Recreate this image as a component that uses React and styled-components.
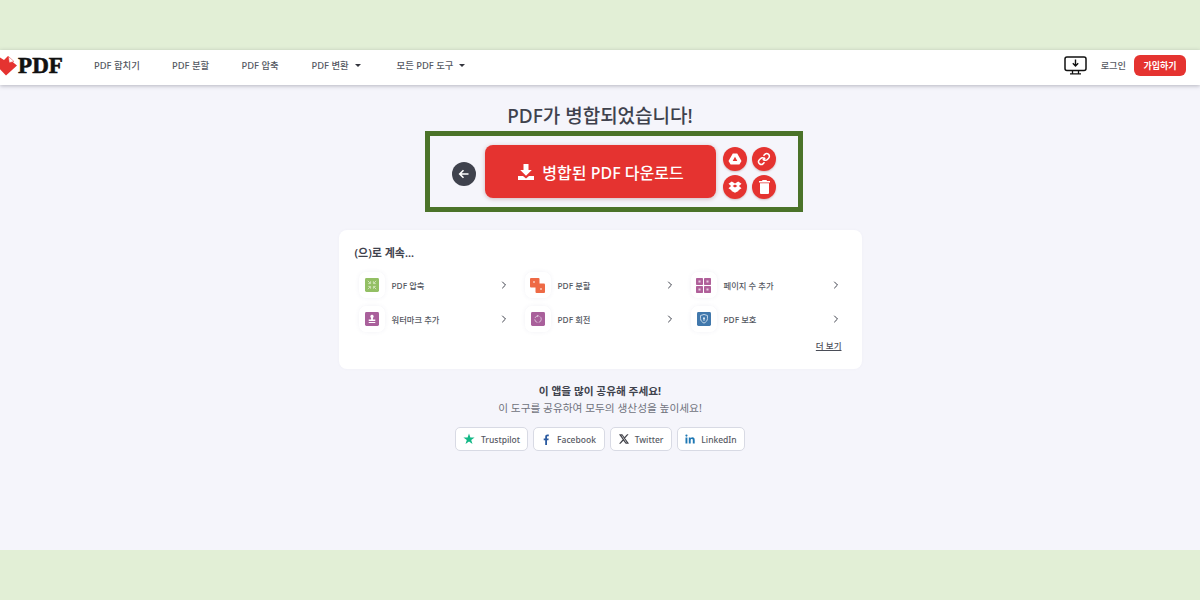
import React from "react";
import styled, { createGlobalStyle } from "styled-components";
import { ChevronRight } from "lucide-react";

const FONT = `"Noto Sans", "Noto Sans CJK KR", sans-serif`;

const Global = createGlobalStyle`
  html, body { margin: 0; padding: 0; background: #e2efd6; }
  * { box-sizing: border-box; }
  body { font-family: ${FONT}; color: #3f424d; }
`;
const Frame = styled.div`
  width: 1200px; height: 600px; padding: 50px 0; overflow: hidden; background: #e2efd6;
`;
const Page = styled.div`
  height: 500px; background: #f5f5fb; display: flex; flex-direction: column; align-items: center;
`;
const Header = styled.header`
  width: 100%; height: 35px; flex: none; background: #fff; box-shadow: 0 1px 4px rgba(60,60,80,.35);
  display: flex; align-items: center; padding: 0 14px 5px 0; overflow: hidden;
`;
const Logo = styled.div`
  display: flex; align-items: center; margin-left: -5px; width: 99px; flex: none;
`;
const LogoText = styled.span`
  font-family: "Liberation Serif", serif; font-weight: 700; font-size: 23px; line-height: 1; color: #111; letter-spacing: .1px;
  -webkit-text-stroke: .6px #111;
`;
const Nav = styled.nav`display: flex; align-items: center; flex: 1;`;
const NavItem = styled.a`
  font-size: 9.4px; font-weight: 500; color: #555862; display: flex; align-items: center; gap: 6px; white-space: nowrap;
  width: ${p => p.$w}px;
`;
const Caret = styled.i`
  width: 0; height: 0; border: 3px solid transparent; border-top: 3.5px solid #33353d; border-bottom: 0; display: block;
`;
const Login = styled.a`
  font-size: 9.2px; font-weight: 500; color: #555862; margin: 0 8px 0 14px;
`;
const Signup = styled.a`
  width: 52px; height: 21px; border-radius: 6px; background: #e53330; color: #fff; font-size: 9px; font-weight: 700;
  display: flex; align-items: center; justify-content: center;
`;
const Title = styled.h1`
  margin: 18px 0 0; font-size: 19px; line-height: 27px; font-weight: 500; color: #3f424d; height: 27px;
`;
const ActionBox = styled.section`
  margin: 1px 0 0 28px; width: 378px; height: 81px; border: 5px solid #4b7329; display: flex; align-items: center; padding-left: 22px;
`;
const RoundBack = styled.button`
  width: 24px; height: 24px; border: 0; padding: 0; border-radius: 50%; background: #3f424d; display: flex; align-items: center; justify-content: center; flex: none; margin-top: 5px;
`;
const Download = styled.button`
  margin-left: 9px; width: 231px; height: 53px; border: 0; border-radius: 8px; background: #e53330; color: #fff; font-family: ${FONT}; font-size: 16px; font-weight: 500;
  display: flex; align-items: center; justify-content: center; gap: 7px; box-shadow: 0 1px 4px rgba(120,40,40,.3); flex: none;
`;
const SideGrid = styled.div`
  margin: 2px 0 0 7px; display: grid; grid-template-columns: 24px 24px; gap: 4px 5px;
`;
const Round = styled.button`
  width: 24px; height: 24px; border: 0; padding: 0; border-radius: 50%; background: #e53330; display: flex; align-items: center; justify-content: center; box-shadow: 0 1px 2px rgba(120,40,40,.25);
`;
const Card = styled.section`
  margin-top: 18px; width: 523px; height: 139px; background: #fff; border-radius: 8px; padding: 15px 15px 0 16px; box-shadow: 0 0 3px rgba(80,80,120,.04);
`;
const CardTitle = styled.h2`
  margin: 0; font-size: 11px; line-height: 16px; font-weight: 600; color: #3f424d;
`;
const ToolGrid = styled.div`
  margin-top: 7px; display: grid; grid-template-columns: repeat(3, 166px); grid-auto-rows: 34px;
`;
const Tool = styled.a`
  display: flex; align-items: center; padding: 0 11px 0 4px;
`;
const IconFrame = styled.span`
  width: 26px; height: 26px; border-radius: 7px; background: #fff; box-shadow: 0 0 4px rgba(90,90,140,.08); display: flex; align-items: center; justify-content: center; flex: none;
`;
const ToolName = styled.span`
  margin-left: 7px; font-size: 8.3px; font-weight: 500; color: #555862; flex: 1; white-space: nowrap;
`;
const MoreRow = styled.div`
  display: flex; justify-content: flex-end; margin-top: 4px; padding-right: 5px;
`;
const More = styled.a`
  font-size: 8.5px; font-weight: 500; color: #4a4d57; text-decoration: underline; line-height: 12px;
`;
const ShareTitle = styled.p`
  margin: 15px 0 0; font-size: 10.7px; line-height: 15px; font-weight: 700; color: #3f424d;
`;
const ShareSub = styled.p`
  margin: 2px 0 0; font-size: 10.7px; line-height: 15px; font-weight: 400; color: #6f727b;
`;
const ShareRow = styled.div`
  margin-top: 11px; display: flex; gap: 5px;
`;
const Share = styled.a`
  height: 24px; width: ${p => p.$w}px; background: #fff; border: 1px solid #d8dae4; border-radius: 5px; font-size: 8.5px; font-weight: 500; color: #555862;
  display: flex; align-items: center; justify-content: center; gap: 6px;
`;

const Tile = ({ bg, children }) => (
  <svg width="14" height="14" viewBox="0 0 15 15"><rect width="15" height="15" rx="1.5" fill={bg} />{children}</svg>
);

const tools = [
  ["PDF 압축", <Tile bg="#93bf64"><path d="M3 3l2.500 2.500M6 3.500V6H3.500M12 3L9.500 5.500M9 3.500V6h2.500M3 12l2.500-2.500M6 11.500V9H3.500M12 12L9.500 9.500M9 11.500V9h2.500" stroke="#dbe9c6" strokeWidth=".9" fill="none" /></Tile>],
  ["PDF 분할", <svg width="15" height="15" viewBox="0 0 15 15"><rect x="0" y="0" width="9.500" height="9.500" rx="1" fill="#ee6a45" /><rect x="5.500" y="5.500" width="9.500" height="9.500" rx="1" fill="#ee6a45" /><circle cx="4" cy="4" r="1" fill="#f8c9b8" /><circle cx="11" cy="11" r="1" fill="#f8c9b8" /></svg>],
  ["페이지 수 추가", <svg width="15" height="15" viewBox="0 0 15 15">{[[0,0],[8,0],[0,8],[8,8]].map(([x,y]) => <g key={x+"-"+y}><rect x={x} y={y} width="7" height="7" rx=".7" fill="#b0609a" /><rect x={x+2.500} y={y+2.500} width="2" height="2" fill="#e8cfe2" /></g>)}</svg>],
  ["워터마크 추가", <Tile bg="#a9609b"><path d="M7.500 3a1.800 1.800 0 0 1 1 3.300V8h2.500v1.700H4V8h2.500V6.300A1.800 1.800 0 0 1 7.500 3zM4 10.600h7v1.200H4z" fill="#fff" /></Tile>],
  ["PDF 회전", <Tile bg="#a9609b"><circle cx="7.500" cy="7.700" r="3.500" stroke="#dcc3d8" strokeWidth="1" strokeDasharray="4.500 1.500" fill="none" /><path d="M6.300 3l2.200 1-1.800 1.600z" fill="#dcc3d8" /></Tile>],
  ["PDF 보호", <Tile bg="#4178ac"><path d="M7.500 2.600l3.700 1.200v3.100c0 2.500-1.600 4-3.700 5-2.100-1-3.700-2.500-3.700-5V3.800z" stroke="#dbe7f2" strokeWidth=".9" fill="none" /><path d="M7.500 5.600a1.200 1.200 0 0 1 .6 2.200v1.500H6.900V7.800a1.200 1.200 0 0 1 .6-2.200z" fill="#dbe7f2" /></Tile>],
];

export default function App() {
  return (
    <Frame>
      <Global />
      <Page>
        <Header>
          <Logo>
            <svg width="23" height="21" viewBox="0 0 23 21"><path d="M0 7l5-4.500 4 2.500L13 1l4 5.500 5 4-11 10L1 10z" fill="#e53330" /><path d="M13.500 1.500l5.500 5-4.800 1.200z" fill="#fff" stroke="#e53330" strokeWidth=".5" /></svg>
            <LogoText>PDF</LogoText>
          </Logo>
          <Nav>
            <NavItem $w={78}>PDF 합치기</NavItem>
            <NavItem $w={69.500}>PDF 분할</NavItem>
            <NavItem $w={70}>PDF 압축</NavItem>
            <NavItem $w={85}>PDF 변환 <Caret /></NavItem>
            <NavItem $w={100}>모든 PDF 도구 <Caret /></NavItem>
          </Nav>
          <svg width="23" height="19" viewBox="0 0 23 19" fill="none"><rect x="1" y="1" width="21" height="13.500" rx="2" stroke="#111" strokeWidth="1.500" /><path d="M11.500 3.500v6M8.800 7.300l2.700 2.700 2.700-2.700" stroke="#111" strokeWidth="1.400" /><path d="M8.500 14.500v3M14.500 14.500v3M6 17.800h11" stroke="#111" strokeWidth="1.300" /></svg>
          <Login>로그인</Login>
          <Signup>가입하기</Signup>
        </Header>
        <Title>PDF가 병합되었습니다!</Title>
        <ActionBox>
          <RoundBack aria-label="back">
            <svg width="12" height="12" viewBox="0 0 12 12" fill="none"><path d="M10.500 6H2M5.500 2.200L1.700 6l3.800 3.800" stroke="#fff" strokeWidth="1.600" /></svg>
          </RoundBack>
          <Download>
            <svg width="18" height="18" viewBox="0 0 18 18"><path d="M6.500 1h5v6h3.300L9 12.700 3.200 7h3.300zM1 13h5l3 2.500 3-2.500h5v4H1z" fill="#fff" /></svg>
            병합된 PDF 다운로드
          </Download>
          <SideGrid>
            <Round aria-label="drive"><svg width="14" height="12" viewBox="0 0 14 12"><path fillRule="evenodd" d="M4.800.5h4.400L13.500 8l-2.100 3.500H2.600L.5 8zM7 3.800L4.700 8h4.600z" fill="#fff" /></svg></Round>
            <Round aria-label="link"><svg width="14" height="14" viewBox="0 0 14 14" fill="none" stroke="#fff" strokeWidth="1.500"><path d="M5.800 8.200l2.400-2.400" /><path d="M6.500 3.700l1.300-1.300a2.400 2.400 0 0 1 3.800 3.800l-1.300 1.300a2.400 2.400 0 0 1-3.500.1" /><path d="M7.500 10.300l-1.300 1.300a2.400 2.400 0 0 1-3.800-3.800l1.300-1.300a2.400 2.400 0 0 1 3.500-.1" /></svg></Round>
            <Round aria-label="dropbox"><svg width="14" height="12" viewBox="0 0 14 12"><path fillRule="evenodd" d="M3.800.5L7 2.600 10.200.5 13.500 2.700 10.900 5 13.500 7.200 10.500 9.300 10.500 10 7 11.800 3.500 10V9.300L.5 7.200 3.100 5 .5 2.700zM7 3.500L4.600 5 7 6.600 9.400 5z" fill="#fff" /></svg></Round>
            <Round aria-label="delete"><svg width="11" height="14" viewBox="0 0 11 14"><path d="M3.500 0h4l.5 1h3v1.500H0V1h3zM1 3.300h9V13a1 1 0 0 1-1 1H2a1 1 0 0 1-1-1z" fill="#fff" /></svg></Round>
          </SideGrid>
        </ActionBox>
        <Card>
          <CardTitle>(으)로 계속...</CardTitle>
          <ToolGrid>
            {tools.map(([name, icon]) => (
              <Tool key={name}>
                <IconFrame>{icon}</IconFrame>
                <ToolName>{name}</ToolName>
                <ChevronRight size={12} color="#3f424d" strokeWidth={2} />
              </Tool>
            ))}
          </ToolGrid>
          <MoreRow><More>더 보기</More></MoreRow>
        </Card>
        <ShareTitle>이 앱을 많이 공유해 주세요!</ShareTitle>
        <ShareSub>이 도구를 공유하여 모두의 생산성을 높이세요!</ShareSub>
        <ShareRow>
          <Share $w={73}><svg width="12" height="12" viewBox="0 0 12 12"><path d="M6 .5l1.400 4h4.200L8.200 7l1.300 4.100L6 8.600l-3.500 2.500L3.800 7 .4 4.500h4.200z" fill="#12b886" /></svg>Trustpilot</Share>
          <Share $w={72}><svg width="9" height="11" viewBox="0 0 9 11"><path d="M3.200 11V6.200H1.700V4.400h1.500V3c0-1.600 1-2.400 2.300-2.400h1.300v1.700h-.9c-.7 0-.9.300-.9.900v1.200h1.700l-.3 1.800H5v4.800z" fill="#2a5aa0" /></svg>Facebook</Share>
          <Share $w={62}><svg width="10" height="10" viewBox="0 0 10 10"><path d="M.3.500h3l2.100 2.900L8 .5h1.200L5.900 4.300 9.700 9.500h-3L4.400 6.400 1.600 9.500H.4l3.500-4zM2 1.300l5.100 7.400h1L3 1.300z" fill="#2f3138" stroke="#2f3138" strokeWidth=".3" /></svg>Twitter</Share>
          <Share $w={68}><svg width="10" height="10" viewBox="0 0 10 10"><path d="M.5 3.500h1.900V9.500H.5zM1.450.5a1.100 1.100 0 1 1 0 2.200 1.100 1.100 0 0 1 0-2.200zM3.800 3.500h1.800v.8c.4-.6 1-1 1.900-1 1.500 0 2.200 1 2.200 2.600v3.600H7.800V6.300c0-.8-.3-1.300-1-1.300s-1.100.5-1.100 1.300v3.200H3.800z" fill="#1f78b4" /></svg>LinkedIn</Share>
        </ShareRow>
      </Page>
    </Frame>
  );
}
